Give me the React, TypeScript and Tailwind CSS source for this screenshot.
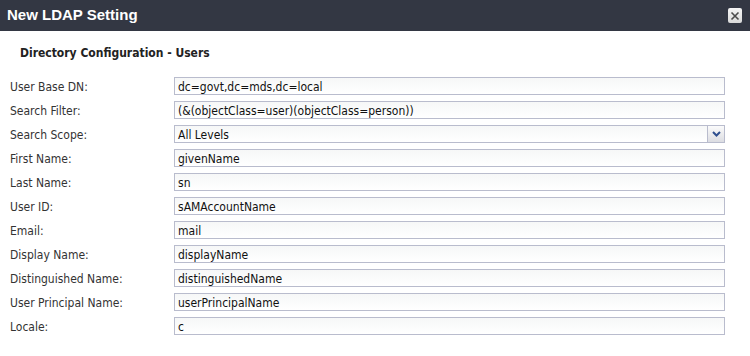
import React from "react";

const fields: { label: string; value: string; select?: boolean }[] = [
  { label: "User Base DN:", value: "dc=govt,dc=mds,dc=local" },
  { label: "Search Filter:", value: "(&(objectClass=user)(objectClass=person))" },
  { label: "Search Scope:", value: "All Levels", select: true },
  { label: "First Name:", value: "givenName" },
  { label: "Last Name:", value: "sn" },
  { label: "User ID:", value: "sAMAccountName" },
  { label: "Email:", value: "mail" },
  { label: "Display Name:", value: "displayName" },
  { label: "Distinguished Name:", value: "distinguishedName" },
  { label: "User Principal Name:", value: "userPrincipalName" },
  { label: "Locale:", value: "c" },
];

export default function App() {
  return (
    <div className="w-[750px] h-[356px] bg-white overflow-hidden font-['DejaVu_Sans_Condensed','DejaVu_Sans',sans-serif]">
      {/* Dialog header */}
      <div className="h-[31px] bg-[#333743] flex items-center justify-between pl-[7px] pr-[8px]">
        <span className="text-white font-bold text-[15px] font-['Liberation_Sans',Arial,sans-serif]">
          New LDAP Setting
        </span>
        <button className="w-[14px] h-[15px] rounded-[2px] bg-gradient-to-b from-[#f4f4f4] to-[#d9d9d9] flex items-center justify-center">
          <svg width="10" height="10" viewBox="0 0 10 10">
            <path d="M1.5 1.5 L8.5 8.5 M8.5 1.5 L1.5 8.5" stroke="#4a4a4a" strokeWidth="1.6" />
          </svg>
        </button>
      </div>

      <div className="pt-[15px] pl-[20px] h-[43px]">
        <h3 className="text-[12px] leading-[14px] font-bold text-[#222]">Directory Configuration - Users</h3>
      </div>

      <div className="flex flex-col">
        {fields.map((f) => (
          <div key={f.label} className="h-[24px] flex items-center">
            <label className="w-[174px] pl-[10px] pt-[1px] text-[12px] text-[#333]">{f.label}</label>
            <div className="w-[551px] h-[18px] border border-[#b9bccd] bg-gradient-to-b from-[#f6f7f7] to-white flex items-center">
              <span className="flex-1 pl-[3px] pt-[1px] text-[12px] text-[#111] leading-none">{f.value}</span>
              {f.select && (
                <div className="w-[17px] h-full border-l border-[#b9bccd] bg-gradient-to-b from-[#fbfbfb] to-[#dcdde2] flex items-center justify-center">
                  <svg width="9" height="6" viewBox="0 0 9 6">
                    <path d="M1 1 L4.5 4.5 L8 1" stroke="#2f4f8f" strokeWidth="2" fill="none" />
                  </svg>
                </div>
              )}
            </div>
          </div>
        ))}
      </div>
    </div>
  );
}
